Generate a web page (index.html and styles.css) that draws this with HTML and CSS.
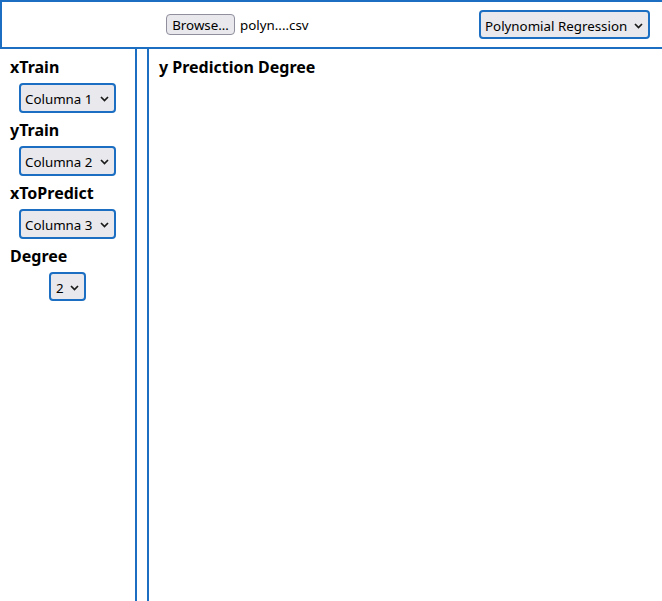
FILE: index.html
```html
<!DOCTYPE html>
<html>
<head>
<meta charset="utf-8">
<link rel="stylesheet" href="styles.css">
</head>
<body>
<header class="topbar">
  <div class="file-input">
    <button class="browse" type="button">Browse…</button>
    <span class="file-name">polyn....csv</span>
  </div>
  <span class="select-wrap">
    <select class="select select-model">
      <option>Polynomial Regression</option>
    </select>
    <svg class="chev" width="9" height="6" viewBox="0 0 9 6"><polyline points="1,1 4.5,4.5 8,1" fill="none" stroke="#1a1a1a" stroke-width="1.7"/></svg>
  </span>
</header>
<div class="layout">
  <aside class="sidebar">
    <div class="field">
      <div class="label">xTrain</div>
      <span class="select-wrap">
        <select class="select select-col"><option>Columna 1</option></select>
        <svg class="chev" width="9" height="6" viewBox="0 0 9 6"><polyline points="1,1 4.5,4.5 8,1" fill="none" stroke="#1a1a1a" stroke-width="1.7"/></svg>
      </span>
    </div>
    <div class="field">
      <div class="label">yTrain</div>
      <span class="select-wrap">
        <select class="select select-col"><option>Columna 2</option></select>
        <svg class="chev" width="9" height="6" viewBox="0 0 9 6"><polyline points="1,1 4.5,4.5 8,1" fill="none" stroke="#1a1a1a" stroke-width="1.7"/></svg>
      </span>
    </div>
    <div class="field">
      <div class="label">xToPredict</div>
      <span class="select-wrap">
        <select class="select select-col"><option>Columna 3</option></select>
        <svg class="chev" width="9" height="6" viewBox="0 0 9 6"><polyline points="1,1 4.5,4.5 8,1" fill="none" stroke="#1a1a1a" stroke-width="1.7"/></svg>
      </span>
    </div>
    <div class="field">
      <div class="label">Degree</div>
      <span class="select-wrap">
        <select class="select select-deg"><option>2</option></select>
        <svg class="chev" width="9" height="6" viewBox="0 0 9 6"><polyline points="1,1 4.5,4.5 8,1" fill="none" stroke="#1a1a1a" stroke-width="1.7"/></svg>
      </span>
    </div>
  </aside>
  <main class="main">
    <div class="title">y Prediction Degree</div>
  </main>
</div>
</body>
</html>
```

FILE: styles.css
```css
* { box-sizing: border-box; }
html, body {
  margin: 0;
  padding: 0;
  background: #fff;
  color: #000;
  font-family: "Noto Sans", "Open Sans", sans-serif;
  overflow: hidden;
}
.topbar {
  height: 49px;
  border: 2px solid #1b6ec2;
  border-right: none;
  display: flex;
  align-items: center;
  justify-content: space-between;
  padding: 0 12px 0 164px;
}
.file-input {
  display: flex;
  align-items: center;
  gap: 5px;
}
.browse {
  font-family: "Noto Sans", sans-serif;
  font-size: 13.333px;
  height: 21px;
  width: 69px;
  padding: 1px 4px 0;
  background: #e9e9ed;
  border: 1px solid #8f8f9d;
  border-radius: 4px;
  color: #000;
  line-height: 17px;
}
.file-name {
  font-size: 13.333px;
  padding-top: 1px;
}
.select-wrap {
  position: relative;
  display: inline-block;
  line-height: 0;
}
.select {
  -webkit-appearance: none;
  appearance: none;
  font-family: "Noto Sans", sans-serif;
  font-size: 13.333px;
  color: #000;
  background: #e9e9ed;
  border: 2px solid #1b6ec2;
  border-radius: 4px;
  padding: 2px 0 0 4px;
  margin: 0;
  outline: none;
}
.chev {
  position: absolute;
  top: 50%;
  right: 7px;
  margin-top: -2px;
  pointer-events: none;
}
.select-model {
  width: 171px;
  height: 29px;
}
.select-col {
  width: 97px;
  height: 30px;
}
.select-deg {
  width: 37px;
  height: 29px;
  padding-left: 5px;
}
.layout {
  display: flex;
  height: 552px;
}
.sidebar {
  width: 137px;
  border-right: 2px solid #1b6ec2;
  padding: 7px 0 0 0;
  flex-shrink: 0;
}
.field {
  display: flex;
  flex-direction: column;
  padding-bottom: 6px;
}
.label {
  font-weight: 700;
  font-size: 16px;
  line-height: 22px;
  padding-left: 10px;
  margin-bottom: 5px;
}
.field .select-wrap {
  align-self: center;
}
.main {
  margin-left: 10px;
  border-left: 2px solid #1b6ec2;
  flex: 1;
  padding: 7px 10px;
}
.title {
  font-weight: 700;
  font-size: 16px;
  line-height: 22px;
}
```
